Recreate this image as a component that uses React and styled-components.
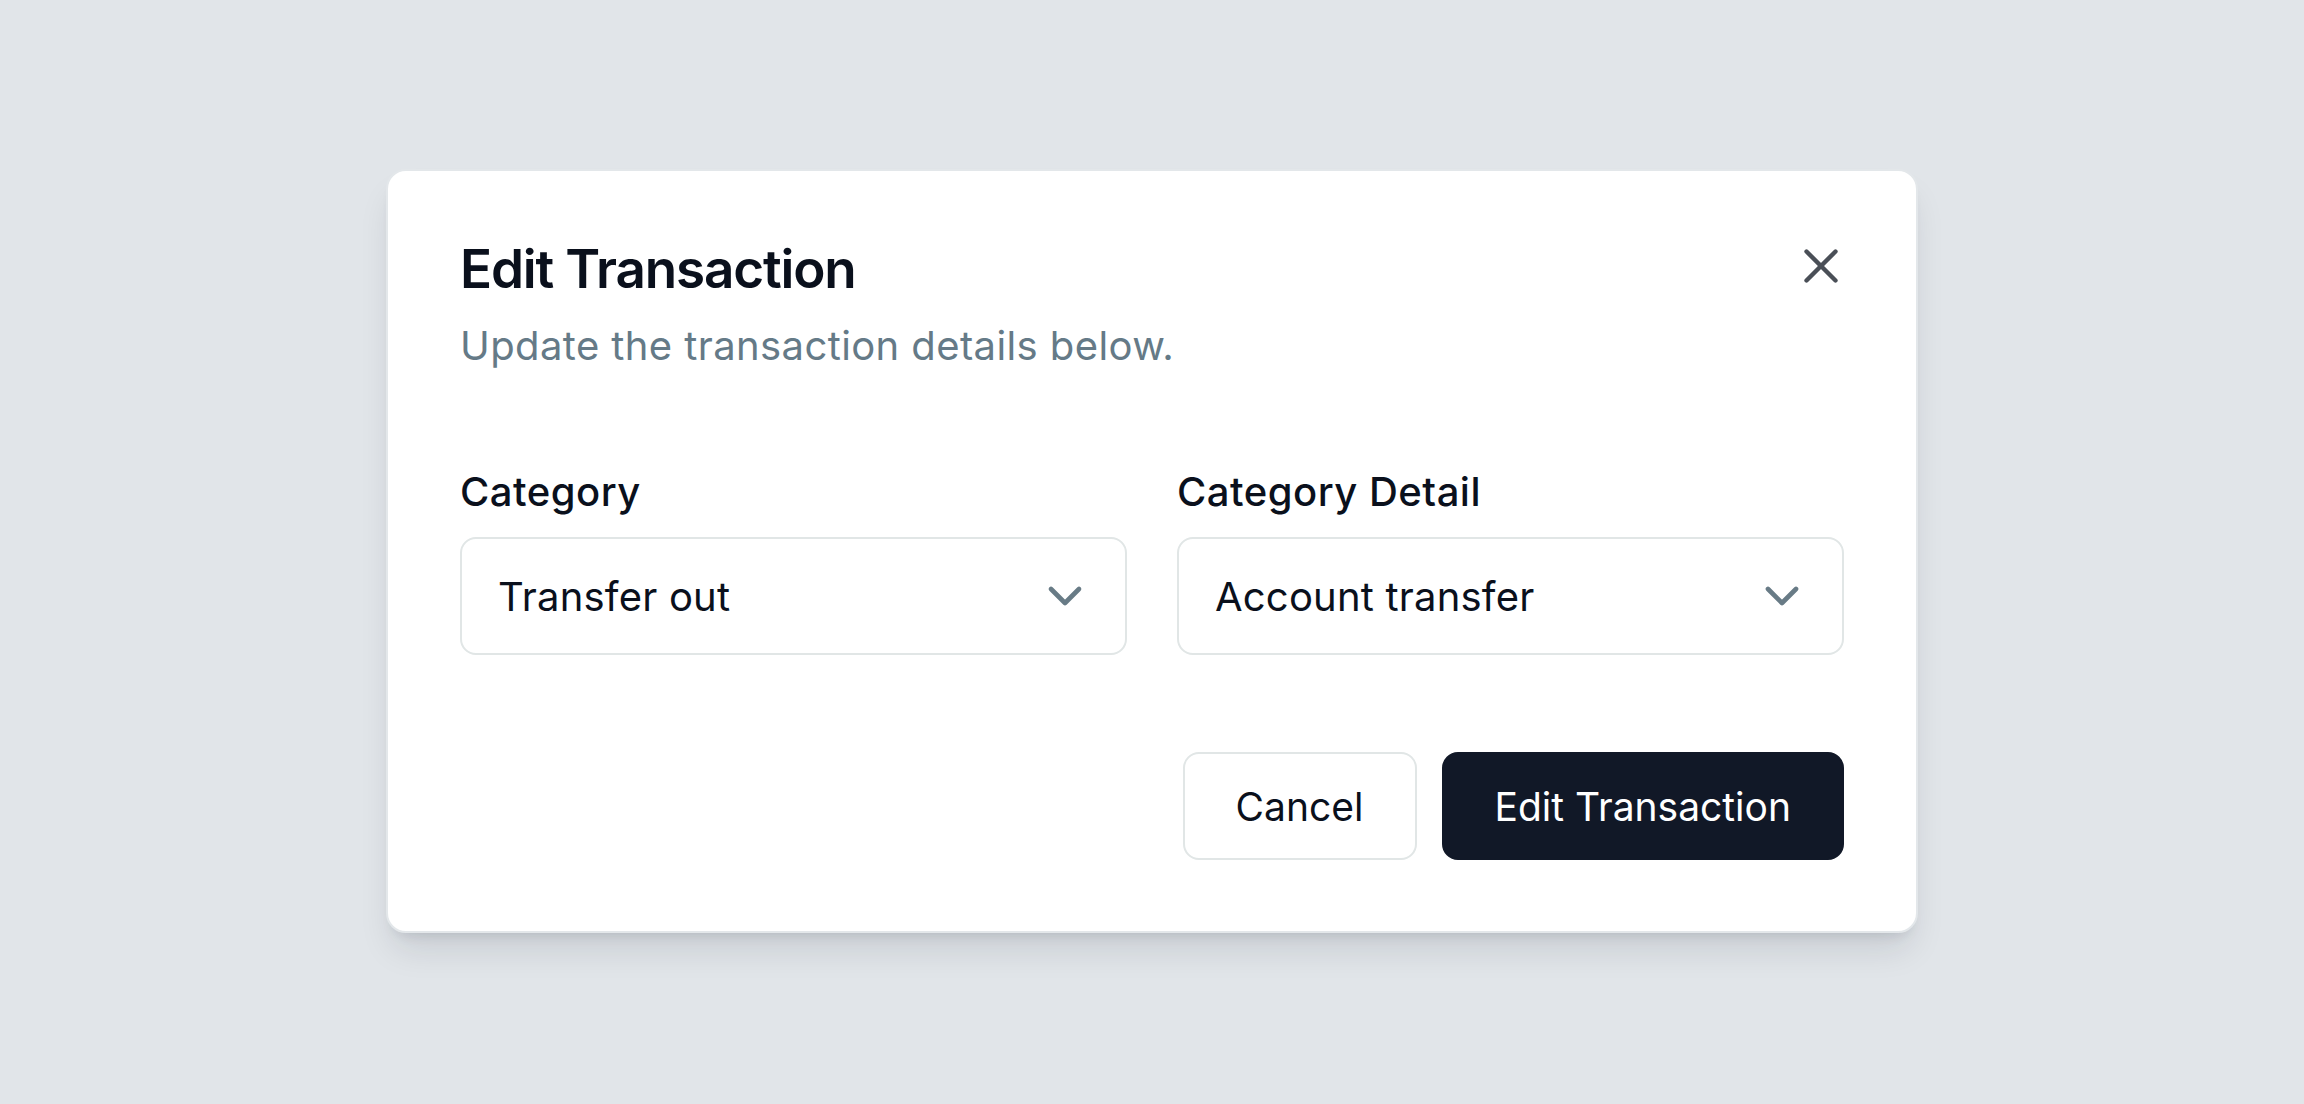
import React from "react";
import styled, { createGlobalStyle } from "styled-components";
import { X, ChevronDown } from "lucide-react";

const Global = createGlobalStyle`
  html, body { margin: 0; padding: 0; }
  body {
    background: #e1e5e9;
    font-family: Inter, "Noto Sans", "Liberation Sans", sans-serif;
    color: #0b1220;
  }
  * { box-sizing: border-box; }
`;

const Page = styled.div`
  min-height: 1104px;
  display: flex;
  justify-content: center;
  align-items: flex-start;
  padding-top: 169px;
`;

const Dialog = styled.div`
  position: relative;
  width: 1532px;
  background: #ffffff;
  border: 2px solid #e3e7ea;
  border-radius: 20px;
  box-shadow: 0 22px 34px -7px rgba(15, 23, 42, 0.12), 0 9px 14px -9px rgba(15, 23, 42, 0.14);
  padding: 66px 72px 71px 72px;
  display: flex;
  flex-direction: column;
`;

const CloseButton = styled.button`
  position: absolute;
  top: 66px;
  right: 66px;
  width: 58px;
  height: 58px;
  padding: 0;
  border: none;
  background: transparent;
  color: #4a4f57;
  display: flex;
  align-items: center;
  justify-content: center;
  cursor: pointer;
`;

const Title = styled.h2`
  margin: 0;
  font-size: 53px;
  line-height: 64px;
  font-weight: 600;
  letter-spacing: -0.022em;
  color: #0a101c;
`;

const Subtitle = styled.p`
  margin: 17px 0 0 0;
  font-size: 40px;
  line-height: 56px;
  font-weight: 400;
  letter-spacing: 0.4px;
  color: #657a87;
`;

const Fields = styled.div`
  margin-top: 90px;
  display: grid;
  grid-template-columns: 1fr 1fr;
  gap: 50px;
`;

const Field = styled.div`
  display: flex;
  flex-direction: column;
  gap: 17px;
`;

const Label = styled.label`
  font-size: 40px;
  line-height: 56px;
  font-weight: 500;
  letter-spacing: 0.5px;
  color: #0a101c;
`;

const SelectBox = styled.div`
  height: 118px;
  border: 2px solid #e1e6e6;
  border-radius: 16px;
  display: flex;
  align-items: center;
  justify-content: space-between;
  padding: 0 32px 0 36px;
  font-size: 40px;
  letter-spacing: 0.2px;
  color: #0a101c;
  background: #fff;
`;

const Chevron = styled.span`
  display: flex;
  color: #687b86;
`;

const Actions = styled.div`
  margin-top: 97px;
  display: flex;
  justify-content: flex-end;
  gap: 25px;
`;

const Button = styled.button`
  height: 108px;
  padding: 0 51px;
  border-radius: 16px;
  font-family: Inter, "Noto Sans", "Liberation Sans", sans-serif;
  font-size: 39px;
  font-weight: 400;
  cursor: pointer;
  border: 2px solid ${(p) => (p.$primary ? "#111827" : "#e1e6e6")};
  background: ${(p) => (p.$primary ? "#111827" : "#ffffff")};
  color: ${(p) => (p.$primary ? "#ffffff" : "#0a101c")};
`;

function Select({ value }) {
  return (
    <SelectBox>
      <span>{value}</span>
      <Chevron>
        <ChevronDown size={56} strokeWidth={2} />
      </Chevron>
    </SelectBox>
  );
}

export default function App() {
  return (
    <>
      <Global />
      <Page>
        <Dialog>
          <CloseButton aria-label="Close">
            <X size={58} strokeWidth={1.8} />
          </CloseButton>
          <Title>Edit Transaction</Title>
          <Subtitle>Update the transaction details below.</Subtitle>
          <Fields>
            <Field>
              <Label>Category</Label>
              <Select value="Transfer out" />
            </Field>
            <Field>
              <Label>Category Detail</Label>
              <Select value="Account transfer" />
            </Field>
          </Fields>
          <Actions>
            <Button>Cancel</Button>
            <Button $primary>Edit Transaction</Button>
          </Actions>
        </Dialog>
      </Page>
    </>
  );
}
